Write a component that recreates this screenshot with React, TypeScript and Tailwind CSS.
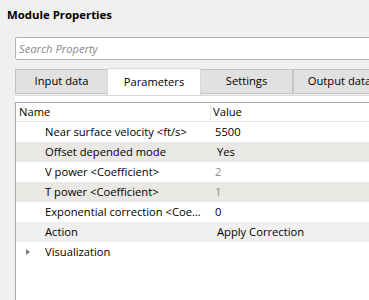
import { useState } from 'react'

type Row = { name: string; value: string; muted?: boolean; indent?: boolean; shade: string }

const rows: Row[] = [
  { name: 'Near surface velocity <ft/s>', value: '5500', shade: 'bg-white' },
  { name: 'Offset depended mode', value: 'Yes', indent: true, shade: 'bg-[#e9e8e5]' },
  { name: 'V power <Coefficient>', value: '2', muted: true, shade: 'bg-white' },
  { name: 'T power <Coefficient>', value: '1', muted: true, shade: 'bg-[#e9e8e5]' },
  { name: 'Exponential correction <Coefficient>', value: '0', shade: 'bg-white' },
  { name: 'Action', value: 'Apply Correction', indent: true, shade: 'bg-[#f0f0f0]' },
]

const tabs = ['Input data', 'Parameters', 'Settings', 'Output data']

export default function App() {
  const [active, setActive] = useState(1)

  return (
    <div
      className="w-[369px] h-[300px] overflow-hidden bg-[#f0f0f0] text-[11.2px] text-black"
      style={{ fontFamily: '"Segoe UI", "Open Sans", sans-serif' }}
    >
      <div className="pl-[7px] pt-[6px] h-[37px] font-bold text-[11.4px]">Module Properties</div>

      <div className="pl-[15px]">
        <input
          placeholder="Search Property"
          className="w-[370px] h-[23px] bg-white border border-[#b4b4b4] rounded-[2px] px-[3px] italic placeholder:text-[#8a8a8a] outline-none"
        />

        <div className="flex items-end h-[35px] mt-0">
          {tabs.map((t, i) => (
            <button
              key={t}
              onClick={() => setActive(i)}
              className={
                i === active
                  ? 'w-[94px] h-[27px] bg-white border border-b-0 border-[#d9d9d9] rounded-t-[2px] -mx-[1px] relative z-10 shrink-0 whitespace-nowrap overflow-hidden'
                  : 'w-[93px] h-[25px] mb-[1px] bg-[#e1e1e1] border border-[#c4c4c4] shrink-0 whitespace-nowrap overflow-hidden'
              }
            >
              {t}
            </button>
          ))}
        </div>

        <div className="bg-white border-t border-[#d9d9d9] pt-[6px] h-[210px]">
          <div className="border-l border-t border-[#a9a9a9] h-full">
            <div className="flex h-[19px] border-b border-[#e5e5e5] items-center">
              <div className="w-[195px] pl-[3px] border-r border-[#e5e5e5] h-full flex items-center">Name</div>
              <div className="pl-[2px]">Value</div>
            </div>
            {rows.map((r) => (
              <div key={r.name} className={`flex h-[20px] items-center ${r.shade}`}>
                <div className="w-[196px] pl-[29px] pr-[2px] truncate">{r.name}</div>
                <div className={`${r.indent ? 'pl-[5px]' : 'pl-[3px]'} ${r.muted ? 'text-[#8c8c8c]' : ''}`}>{r.value}</div>
              </div>
            ))}
            <div className="flex h-[20px] items-center">
              <svg width="29" height="20" viewBox="0 0 29 20">
                <path d="M10 7 L14 10 L10 13 Z" fill="#7a7a7a" />
              </svg>
              <div>Visualization</div>
            </div>
          </div>
        </div>
      </div>
    </div>
  )
}
